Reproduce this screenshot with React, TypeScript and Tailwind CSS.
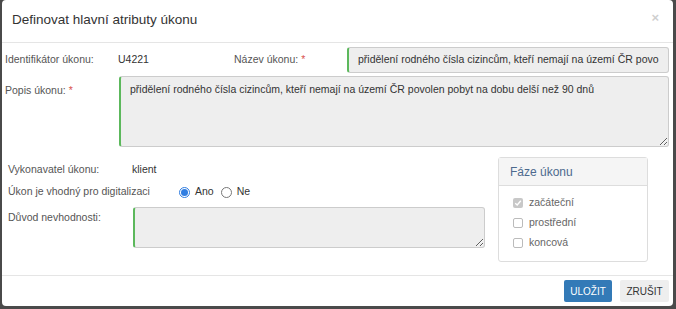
import React from "react";

const font = { fontFamily: '"Liberation Sans", Arial, sans-serif' };

function Req() {
  return <span className="text-[#d9534f]"> *</span>;
}

function Radio({ checked }: { checked?: boolean }) {
  return checked ? (
    <span className="w-[11px] h-[11px] shrink-0 rounded-full border border-[#2f7de1] bg-white flex items-center justify-center">
      <span className="w-[7px] h-[7px] rounded-full bg-[#2f7de1]" />
    </span>
  ) : (
    <span className="w-[11px] h-[11px] shrink-0 rounded-full border border-[#777] bg-white block" />
  );
}

function Check({ checked, label }: { checked?: boolean; label: string }) {
  return (
    <div className="flex items-center h-[20px]">
      {checked ? (
        <span className="w-[10px] h-[10px] rounded-[2px] bg-[#c8c8c8] flex items-center justify-center">
          <svg width="8" height="8" viewBox="0 0 8 8">
            <path d="M1.2 4.2 L3.2 6 L6.8 1.8" stroke="#fff" strokeWidth="1.4" fill="none" />
          </svg>
        </span>
      ) : (
        <span className="w-[10px] h-[10px] rounded-[2px] border border-[#bbb] bg-white" />
      )}
      <span className="ml-[6px] text-[#666]">{label}</span>
    </div>
  );
}

export default function App() {
  return (
    <div className="w-[676px] h-[309px] bg-[#4a4a4a] pl-[2px] pr-[3px] pb-[3px]" style={font}>
      <div className="h-full bg-white rounded-[4px] flex flex-col text-[10.5px] text-[#333]">
        {/* header */}
        <div className="h-[43px] shrink-0 border-b border-[#e5e5e5] flex items-center justify-between pl-[10px] pr-[14px]">
          <h4 className="text-[13.5px] text-[#333] pb-[2px]">Definovat hlavní atributy úkonu</h4>
          <span className="text-[#cfcfcf] text-[13px] font-bold leading-none pb-[7px]">×</span>
        </div>

        {/* body */}
        <div className="flex-1 pl-[3px] pr-[4px] pt-[4px]">
          <div className="flex items-center h-[26px]">
            <span className="w-[113px] text-[#555]">Identifikátor úkonu:</span>
            <span className="w-[116px]">U4221</span>
            <span className="w-[113px] text-[#555]">Název úkonu:<Req /></span>
            <div className="flex-1 h-[26px] bg-[#eee] border border-[#ccc] border-l-2 border-l-[#5cb85c] rounded-[3px] flex items-center pl-[9px] overflow-hidden whitespace-nowrap">
              přidělení rodného čísla cizincům, kteří nemají na území ČR povo
            </div>
          </div>

          <div className="flex mt-[3px]">
            <span className="w-[114px] pt-[7px] text-[#555]">Popis úkonu:<Req /></span>
            <textarea
              readOnly
              value="přidělení rodného čísla cizincům, kteří nemají na území ČR povolen pobyt na dobu delší než 90 dnů"
              className="flex-1 h-[71px] bg-[#eee] border border-[#ccc] border-l-2 border-l-[#5cb85c] rounded-[3px] pl-[9px] pt-[5px] outline-none resize-y"
            />
          </div>

          <div className="flex mt-[10px] pl-[3px]">
            <div className="w-[487px]">
              <div className="flex items-center h-[22px] mt-[2px]">
                <span className="w-[124px] text-[#555]">Vykonavatel úkonu:</span>
                <span>klient</span>
              </div>
              <div className="flex items-center h-[22px]">
                <span className="w-[171px] text-[#555]">Úkon je vhodný pro digitalizaci</span>
                <Radio checked />
                <span className="ml-[5px]">Ano</span>
                <span className="ml-[7px] flex items-center">
                  <Radio />
                </span>
                <span className="ml-[5px]">Ne</span>
              </div>
              <div className="flex mt-[4px]">
                <span className="w-[125px] pt-[3px] text-[#555]">Důvod nevhodnosti:</span>
                <textarea
                  readOnly
                  value=""
                  className="w-[352px] h-[41px] bg-[#eee] border border-[#ccc] border-l-2 border-l-[#5cb85c] rounded-[3px] outline-none resize-y"
                />
              </div>
            </div>
            <div className="w-[150px] h-[105px] border border-[#ddd] rounded-[3px] ml-[3px]">
              <div className="h-[28px] bg-[#f5f5f5] border-b border-[#ddd] flex items-center pl-[11px] text-[12px] text-[#4d6a8e]">
                Fáze úkonu
              </div>
              <div className="pl-[14px] pt-[7px]">
                <Check checked label="začáteční" />
                <Check label="prostřední" />
                <Check label="koncová" />
              </div>
            </div>
          </div>
        </div>

        {/* footer */}
        <div className="h-[31px] shrink-0 border-t border-[#e5e5e5] flex items-center justify-end gap-[8px] pr-[4px]">
          <button className="w-[48px] h-[22px] bg-[#337ab7] text-white text-[10px] rounded-[2px]">ULOŽIT</button>
          <button className="w-[49px] h-[22px] bg-[#eee] text-[#333] text-[10px] rounded-[2px]">ZRUŠIT</button>
        </div>
      </div>
    </div>
  );
}
